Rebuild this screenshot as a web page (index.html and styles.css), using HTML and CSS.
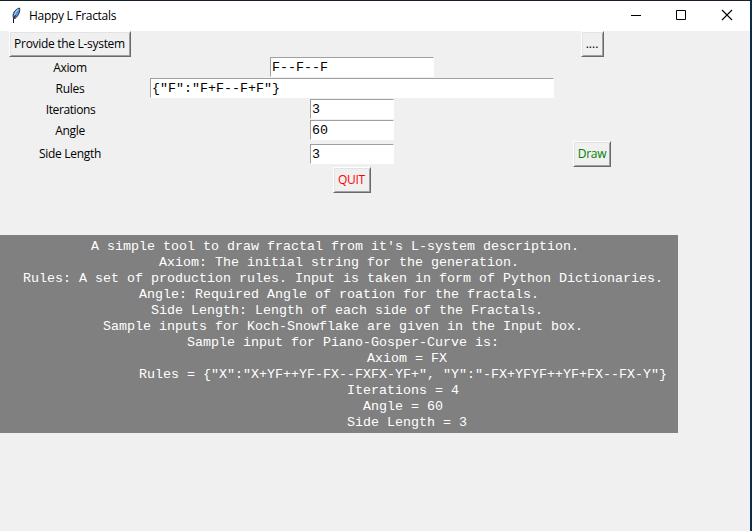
FILE: index.html
```html
<!DOCTYPE html>
<html lang="en">
<head>
<meta charset="utf-8">
<title>Happy L Fractals</title>
<link rel="stylesheet" href="styles.css">
</head>
<body>
<main class="window">
  <header class="titlebar">
    <svg class="feather" width="12" height="18" viewBox="0 0 12 18">
      <path d="M3.500 12C2 8 4.500 3.500 9.500 2C10.500 5 8.500 10 5 12.500Z" fill="#4f8fdc" stroke="#30343f" stroke-width="1"/>
      <path d="M4.500 9C5 6.500 6.500 4.500 8.500 3.200" fill="none" stroke="#a9cdf5" stroke-width="1.200"/>
      <path d="M3.500 17V12.500L5.500 9.500" fill="none" stroke="#111" stroke-width="1"/>
    </svg>
    <h1 class="title">Happy L Fractals</h1>
    <div class="controls">
      <svg width="46" height="30" viewBox="0 0 46 30"><path d="M17 14.500H27" stroke="#000"/></svg>
      <svg width="46" height="30" viewBox="0 0 46 30"><path d="M16.500 9.500H25.500V18.500H16.500Z" fill="none" stroke="#000"/></svg>
      <svg width="46" height="30" viewBox="0 0 46 30"><path d="M16 9L26 19M26 9L16 19" stroke="#000" stroke-width="1.100"/></svg>
    </div>
  </header>
  <form class="form">
    <button type="button" class="button provide">Provide the L-system</button>
    <span></span>
    <button type="button" class="button more">....</button>
    <label for="axiom">Axiom</label>
    <input id="axiom" class="entry medium" value="F--F--F">
    <span></span>
    <label for="rules">Rules</label>
    <input id="rules" class="entry wide" value='{"F":"F+F--F+F"}'>
    <span></span>
    <label for="iterations" class="iterations">Iterations</label>
    <input id="iterations" class="entry" value="3">
    <span></span>
    <label for="angle">Angle</label>
    <input id="angle" class="entry" value="60">
    <span></span>
    <label for="side">Side Length</label>
    <input id="side" class="entry" value="3">
    <button type="button" class="button draw">Draw</button>
    <span></span>
    <button type="button" class="button quit">QUIT</button>
    <span></span>
  </form>
  <pre class="help">A simple tool to draw fractal from it's L-system description. 
Axiom: The initial string for the generation.
 Rules: A set of production rules. Input is taken in form of Python Dictionaries.
Angle: Required Angle of roation for the fractals.
  Side Length: Length of each side of the Fractals.
 Sample inputs for Koch-Snowflake are given in the Input box.
 Sample input for Piano-Gosper-Curve is:
                 Axiom = FX
                Rules = {"X":"X+YF++YF-FX--FXFX-YF+", "Y":"-FX+YFYF++YF+FX--FX-Y"}
                Iterations = 4
                Angle = 60
                 Side Length = 3</pre>
</main>
</body>
</html>
```
FILE: styles.css
```css
* { box-sizing: border-box; }
body {
  margin: 0;
  height: 531px;
  overflow: hidden;
  font: 12px/16px "Open Sans", "Noto Sans", sans-serif;
  letter-spacing: -0.3px;
  color: #000;
}
.window {
  height: 531px;
  border-top: 1px solid #17212e;
  border-right: 2px solid #0d2c4b;
  background: #f0f0f0;
}
.titlebar {
  display: flex;
  align-items: center;
  height: 30px;
  background: #fff;
}
.feather { margin: 0 7px 2px 10px; }
.title { margin: 0; font-size: 12px; font-weight: 400; }
.controls { display: flex; margin: 0 -2px 0 auto; }
.controls svg { display: block; }
.form {
  display: grid;
  grid-template-columns: 140px 424px 56px;
  grid-template-rows: 26px repeat(4, 21px) 26px 26px;
  justify-items: center;
  align-items: center;
  height: 204px;
  align-content: start;
}
.button {
  height: 26px;
  width: 38px;
  padding: 0;
  border: 1px solid;
  border-color: #fff #696969 #696969 #fff;
  background: #f0f0f0;
  box-shadow: inset 1px 1px #e3e3e3, inset -1px -1px #a0a0a0;
  color: #000;
  font: inherit;
  letter-spacing: inherit;
  white-space: nowrap;
}
.provide { width: 122px; padding-right: 1px; }
.more { width: 23px; letter-spacing: 0; }
.draw { color: #008000; }
.quit { padding-right: 1px; color: #f00; }
.iterations { letter-spacing: -0.4px; padding-left: 1px; }
.entry {
  align-self: start;
  width: 84px;
  height: 20px;
  padding: 0 0 0 1px;
  border: 1px solid;
  border-color: #a0a0a0 #fff #fff #a0a0a0;
  border-radius: 0;
  background: #fff;
  font: 13.333px/16px "Liberation Mono", monospace;
  color: #000;
}
.medium { width: 164px; }
.wide { width: 404px; }
#side { align-self: center; }
.help {
  width: 678px;
  height: 198px;
  margin: 0;
  padding: 4px 0 2px;
  background: #808080;
  color: #fff;
  font: 13.333px/16px "Liberation Mono", monospace;
  letter-spacing: 0;
  text-align: center;
}
```
